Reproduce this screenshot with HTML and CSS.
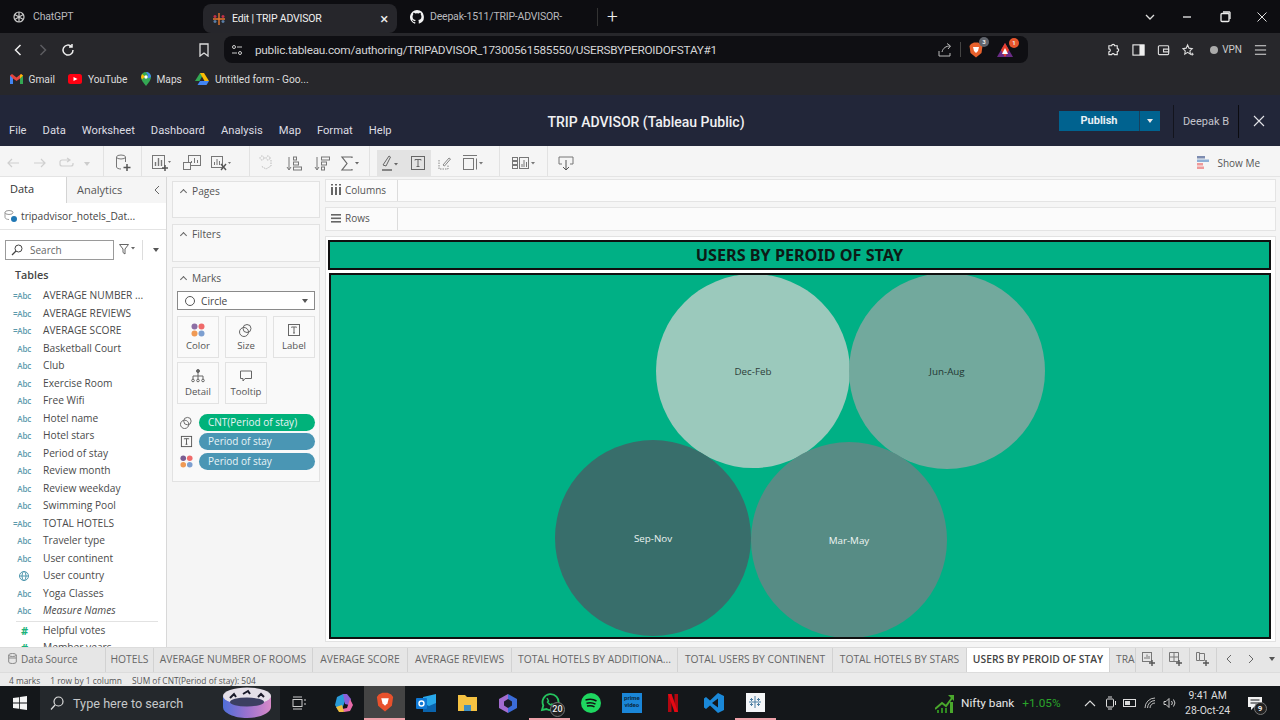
FILE: index.html
```html
<!DOCTYPE html>
<html lang="en">
<head>
  <meta charset="UTF-8" />
  <title>Edit | TRIP ADVISOR</title>
  <link rel="stylesheet" href="styles.css">
</head>
<body>

  <!-- Browser tabs -->
  <div class="tabstrip">
    <div class="btab btab-gpt">
      <svg width="14" height="14" viewBox="0 0 14 14" fill="none" stroke="#c9c9c9" stroke-width="1.2"><circle cx="7" cy="7" r="5"/><path d="M7 2v10M2.700 4.500l8.600 5M2.700 9.500l8.600-5"/></svg>
      <span>ChatGPT</span>
    </div>
    <div class="btab btab-active">
      <svg width="14" height="14" viewBox="0 0 14 14" fill="none" stroke-width="1.4"><path d="M7 1v12M1 7h12" stroke="#e8762c"/><path d="M3 3v3M1.500 4.500h3M11 3v3M9.500 4.500h3" stroke="#c8304a"/><path d="M3 8v3M1.500 9.500h3M11 8v3M9.500 9.500h3" stroke="#5b7fa8"/></svg>
      <span>Edit | TRIP ADVISOR</span>
      <b class="btab-x">×</b>
    </div>
    <div class="btab btab-git">
      <svg width="14" height="14" viewBox="0 0 16 16" fill="#f2f2f2"><path d="M8 0a8 8 0 0 0-2.500 15.600c.4.100.5-.2.500-.4v-1.400c-2.200.5-2.700-1-2.700-1-.4-.9-.9-1.200-.9-1.200-.7-.5.100-.5.100-.5.800.100 1.200.8 1.200.8.700 1.200 1.900.9 2.300.7.100-.5.300-.9.500-1.100-1.800-.2-3.600-.9-3.600-4 0-.9.300-1.600.8-2.100-.1-.2-.4-1 .1-2.100 0 0 .7-.2 2.200.8a7.600 7.600 0 0 1 4 0c1.500-1 2.200-.8 2.200-.8.400 1.100.200 1.900.100 2.100.5.600.8 1.300.8 2.100 0 3.100-1.900 3.700-3.700 3.900.3.300.6.800.6 1.500v2.200c0 .2.100.5.600.4A8 8 0 0 0 8 0z"/></svg>
      <span>Deepak-1511/TRIP-ADVISOR-</span>
    </div>
    <div class="btab-sep"></div>
    <div class="btab-plus">+</div>
    <div class="win-btns">
      <svg width="12" height="12" viewBox="0 0 12 12" fill="none" stroke="#ddd" stroke-width="1.3"><path d="M2 4l4 4 4-4"/></svg>
      <svg width="12" height="12" viewBox="0 0 12 12" fill="none" stroke="#eee" stroke-width="1.3"><path d="M2 6h8"/></svg>
      <svg width="12" height="12" viewBox="0 0 12 12" fill="none" stroke="#eee" stroke-width="1.3"><rect x="2" y="2.500" width="8" height="8" rx="1"/><path d="M4 1h6.500l.5.500V8"/></svg>
      <svg width="12" height="12" viewBox="0 0 12 12" fill="none" stroke="#ddd"><path d="M1.500 1.500l9 9M10.500 1.500l-9 9"/></svg>
    </div>
  </div>

  <!-- Address bar -->
  <div class="addrbar">
    <div class="nav-btns">
      <svg width="14" height="14" viewBox="0 0 14 14" fill="none" stroke="#eee" stroke-width="1.5"><path d="M9.500 2L4.500 7l5 5"/></svg>
      <svg width="14" height="14" viewBox="0 0 14 14" fill="none" stroke="#5c5c60" stroke-width="1.5"><path d="M4.500 2l5 5-5 5"/></svg>
      <svg width="14" height="14" viewBox="0 0 14 14" fill="none" stroke="#eee" stroke-width="1.5"><path d="M12 7a5 5 0 1 1-1.500-3.500M11 1v3H8"/></svg>
    </div>
    <svg class="bookmark-ic" width="12" height="14" viewBox="0 0 12 14" fill="none" stroke="#ddd" stroke-width="1.3"><path d="M2 1h8v12L6 10l-4 3z"/></svg>
    <div class="urlbox">
      <svg width="12" height="12" viewBox="0 0 12 12" fill="none" stroke="#ccc"><circle cx="3" cy="3" r="1.500"/><path d="M6 3h5M1 9h5"/><circle cx="9" cy="9" r="1.500"/></svg>
      <span class="url">public.tableau.com/authoring/TRIPADVISOR_17300561585550/USERSBYPEROIDOFSTAY#1</span>
      <div class="url-icons">
        <svg width="14" height="14" viewBox="0 0 14 14" fill="none" stroke="#bbb"><path d="M1 8v5h11v-3M4 9c1-4 4-6 8-6M9 .5L12.500 3 10 6"/></svg>
        <i class="url-sep"></i>
        <span class="shield">
          <svg width="14" height="16" viewBox="0 0 14 16"><path d="M2 2l3-1.500h4L12 2l1.500 2-1 7L7 15.500 1.500 11l-1-7z" fill="#e8612c"/><path d="M4 5h6L9 9l-2 2-2-2z" fill="#fff"/></svg>
          <b class="badge badge-grey">3</b>
        </span>
        <span class="shield">
          <svg width="16" height="14" viewBox="0 0 16 14"><path d="M8 0l8 14H0z" fill="#6a2b86"/><path d="M8 0l4 7-4 7-4-7z" fill="#e8402c"/><path d="M8 5l3 6H5z" fill="#fff"/></svg>
          <b class="badge badge-red">1</b>
        </span>
      </div>
    </div>
    <div class="ext-icons">
      <svg width="14" height="14" viewBox="0 0 14 14" fill="none" stroke="#e8e8e8" stroke-width="1.2"><path d="M5 2.500a1.600 1.600 0 0 1 3.200 0H11v3a1.600 1.600 0 0 1 0 3.200V12H8a1.600 1.600 0 0 0-3 0H2V9a1.600 1.600 0 0 0 0-3.200V2.500z"/></svg>
      <svg width="14" height="14" viewBox="0 0 14 14"><rect x="1" y="1.500" width="12" height="11" fill="none" stroke="#eee" stroke-width="1.2"/><rect x="8" y="1.500" width="5" height="11" fill="#eee"/></svg>
      <svg width="14" height="14" viewBox="0 0 14 14" fill="none" stroke="#ddd" stroke-width="1.2"><rect x="1.500" y="2.500" width="11" height="9.500" rx="1"/><path d="M7 6h5.500v3H7z"/></svg>
      <svg width="14" height="14" viewBox="0 0 14 14" fill="none" stroke="#ddd" stroke-width="1.2"><path d="M6 1.500l1.500 3.500 3.500.5-2.500 2.500.5 3.500L6 9.500 3 11.500l.5-3.500L1 5.500 4.500 5zM11 10v3M9.500 11.500h3"/></svg>
      <span class="vpn"><i></i>VPN</span>
      <svg width="14" height="14" viewBox="0 0 14 14" fill="none" stroke="#ddd" stroke-width="1.2"><path d="M1 2.500h12M1 7h12M1 11.500h12"/></svg>
    </div>
  </div>

  <!-- Bookmarks -->
  <div class="bookmarks">
    <span class="bm">
      <svg width="13" height="10" viewBox="0 0 13 10"><path d="M0 1.500v8.500h3V4.500L6.500 7 10 4.500V10h3V1.500L11 0 6.500 3.500 2 0z" fill="#e8453c"/><path d="M0 1.500v8.500h3V4.500z" fill="#4285f4"/><path d="M10 4.500V10h3V1.500z" fill="#34a853"/><path d="M11 0l2 1.500L10 4.500V1.500z" fill="#fbbc04"/></svg>
      Gmail
    </span>
    <span class="bm">
      <svg width="14" height="10" viewBox="0 0 14 10"><rect width="14" height="10" rx="2.500" fill="#f01"/><path d="M5.500 3l4 2-4 2z" fill="#fff"/></svg>
      YouTube
    </span>
    <span class="bm">
      <svg width="10" height="14" viewBox="0 0 10 14"><path d="M5 0a5 5 0 0 0-5 5c0 3.500 5 9 5 9s5-5.500 5-9a5 5 0 0 0-5-5z" fill="#34a853"/><path d="M5 0a5 5 0 0 1 5 5L7 6.500V3z" fill="#4285f4"/><path d="M1 2l3 2.500L1 7.500 0 5z" fill="#fbbc04"/><circle cx="5" cy="5" r="1.700" fill="#fff"/></svg>
      Maps
    </span>
    <span class="bm">
      <svg width="14" height="12" viewBox="0 0 14 12"><path d="M5 0h4l-4.500 8H0z" fill="#34a853"/><path d="M9 0l5 8H9.500L5 0z" fill="#fbbc04"/><path d="M2.500 12L5 8h9l-2.500 4z" fill="#4285f4"/></svg>
      Untitled form - Goo...
    </span>
  </div>

  <!-- Tableau header -->
  <div class="appbar">
    <div class="menus">
      <span>File</span><span>Data</span><span>Worksheet</span><span>Dashboard</span><span>Analysis</span><span>Map</span><span>Format</span><span>Help</span>
    </div>
    <div class="wb-title">TRIP ADVISOR (Tableau Public)</div>
    <div class="publish">
      <span class="publish-main">Publish</span>
      <span class="publish-caret"></span>
    </div>
    <div class="user">Deepak B</div>
    <svg class="app-close" width="12" height="12" viewBox="0 0 12 12" fill="none" stroke="#e4e4e8" stroke-width="1.1"><path d="M1 1l10 10M11 1L1 11"/></svg>
  </div>

  <!-- Toolbar -->
  <div class="toolbar">
    <div class="tgroup tg-history">
      <span class="tool t26"><svg width="14" height="12" viewBox="0 0 14 12" fill="none" stroke="#cfcfcf" stroke-width="1.2"><path d="M13 6H2M6 2L2 6l4 4"/></svg></span>
      <span class="tool t28"><svg width="14" height="12" viewBox="0 0 14 12" fill="none" stroke="#cfcfcf" stroke-width="1.2"><path d="M1 6h11M8 2l4 4-4 4"/></svg></span>
      <span class="tool t26"><svg width="16" height="12" viewBox="0 0 16 12" fill="none" stroke="#cfcfcf" stroke-width="1.2"><path d="M10 3H3a2 2 0 0 0-2 2v2a2 2 0 0 0 2 2h9a2 2 0 0 0 2-2V6M8 1l3 2-3 2"/></svg></span>
      <span class="tool t14"><i class="caret caret-light"></i></span>
    </div>
    <div class="tgroup tg-source">
      <span class="tool"><svg width="16" height="18" viewBox="0 0 16 18" fill="none" stroke="#777"><ellipse cx="6" cy="3" rx="4.500" ry="2"/><path d="M1.500 3v10c0 1 2 2 4.500 2M10.500 3v5"/><path d="M12 10v7M8.500 13.500h7" stroke="#555" stroke-width="1.5"/></svg></span>
    </div>
    <div class="tgroup tg-sheets">
      <span class="tool t28"><svg width="20" height="18" viewBox="0 0 20 18" fill="none" stroke="#777"><rect x=".5" y="1.500" width="12" height="13"/><path d="M3.500 12V8M6.500 12V4M9.500 12V6" stroke-width="1.4"/><path d="M13 11v6M10 14h6" stroke="#555" stroke-width="1.5"/><path d="M16 7h3l-1.500 2z" fill="#777" stroke="none"/></svg></span>
      <span class="tool t28 t-mid"><svg width="18" height="16" viewBox="0 0 18 16" fill="none" stroke="#777"><rect x="5.500" y=".5" width="12" height="10"/><path d="M8.500 8V6M11.500 8V3M14.500 8V5"/><rect x=".5" y="7.500" width="7" height="7" fill="#f5f5f5"/></svg></span>
      <span class="tool t28"><svg width="22" height="16" viewBox="0 0 22 16" fill="none" stroke="#777"><rect x=".5" y="1.500" width="11" height="11"/><path d="M3.500 10V7M6 10V4M8.500 10V6"/><path d="M10 9l5 6M15 9l-5 6" stroke="#555" stroke-width="1.4"/><path d="M17 7h3l-1.500 2z" fill="#777" stroke="none"/></svg></span>
    </div>
    <div class="tgroup tg-sort">
      <span class="tool t28"><svg width="14" height="16" viewBox="0 0 14 16" fill="none" stroke="#bbb" stroke-dasharray="1.500 1"><circle cx="3" cy="3" r="2"/><circle cx="9" cy="3" r="2"/><path d="M12 5v6l-5 3-5-3"/></svg></span>
      <span class="tool t28"><svg width="16" height="15" viewBox="0 0 16 15" fill="none" stroke="#777"><path d="M3 1v12M1 11l2 3 2-3"/><rect x="7.500" y="1" width="3" height="3"/><rect x="7.500" y="6" width="5" height="3"/><rect x="7.500" y="11" width="8" height="3"/></svg></span>
      <span class="tool t28"><svg width="16" height="15" viewBox="0 0 16 15" fill="none" stroke="#777"><path d="M3 1v12M1 11l2 3 2-3"/><rect x="7.500" y="1" width="8" height="3"/><rect x="7.500" y="6" width="5" height="3"/><rect x="7.500" y="11" width="3" height="3"/></svg></span>
      <span class="tool t28"><svg width="20" height="15" viewBox="0 0 20 15" fill="none" stroke="#666" stroke-width="1.2"><path d="M12 2V1H2l5 6.500L2 14h10v-1"/><path d="M15 6h4l-2 2.500z" fill="#666" stroke="none"/></svg></span>
    </div>
    <div class="tgroup tg-format">
      <span class="tool t-hl"><svg width="20" height="16" viewBox="0 0 20 16" fill="none" stroke="#666"><path d="M2 10L8 1l1.500 1L5 11z"/><path d="M1 15h10" stroke-width="1.5"/><path d="M13 8h4l-2 2.500z" fill="#666" stroke="none"/></svg></span>
      <span class="tool t-hl"><svg width="14" height="14" viewBox="0 0 14 14" fill="none" stroke="#666"><rect x=".5" y=".5" width="13" height="13"/><path d="M4 4.500V3.500h6v1M7 3.500v7M5.500 10.500h3"/></svg></span>
      <span class="tool t28"><svg width="14" height="14" viewBox="0 0 14 14" fill="none" stroke="#888"><path d="M1 4v9h9V9" stroke-dasharray="1.500 1"/><path d="M5 9l6-7 1.500 1-6 7z"/></svg></span>
      <span class="tool t28"><svg width="22" height="16" viewBox="0 0 22 16" fill="none" stroke="#777"><path d="M1 .5h14"/><rect x="1.500" y="3.500" width="10" height="11"/><path d="M14.500 3.500v11"/><path d="M17 7h4l-2 2.500z" fill="#777" stroke="none"/></svg></span>
    </div>
    <div class="tgroup tg-fit">
      <span class="tool"><svg width="24" height="14" viewBox="0 0 24 14" fill="none" stroke="#777"><rect x=".5" y="1.500" width="5" height="3"/><rect x=".5" y="5.500" width="5" height="3"/><rect x=".5" y="9.500" width="5" height="3"/><rect x="7.500" y="1.500" width="9" height="11"/><path d="M10 11V8M12 11V4M14.500 11V6"/><path d="M19 6h4l-2 2.500z" fill="#777" stroke="none"/></svg></span>
    </div>
    <div class="tgroup tg-share">
      <span class="tool"><svg width="16" height="15" viewBox="0 0 16 15" fill="none" stroke="#777"><path d="M4 8H1V1h14v7h-3"/><path d="M8 4v10M5 11l3 3 3-3" stroke="#555"/></svg></span>
    </div>
    <div class="showme">
      <svg width="13" height="14" viewBox="0 0 13 14"><rect width="8" height="2.500" fill="#7d8cb0"/><rect y="3.500" width="12" height="2.500" fill="#8fb0d6"/><rect y="7" width="6" height="2.500" fill="#ef9a9a"/><rect y="10.500" width="7" height="2.500" fill="#ef9a9a"/></svg>
      <span>Show Me</span>
    </div>
  </div>

  <!-- Workspace -->
  <div class="workspace">

    <div class="datapane">
      <div class="dp-tabs">
        <div class="dp-tab dp-tab-on">Data</div>
        <div class="dp-tab dp-tab-off">Analytics</div>
        <svg class="dp-collapse" width="8" height="10" viewBox="0 0 8 10" fill="none" stroke="#666"><path d="M6 1L2 5l4 4"/></svg>
      </div>
      <div class="dp-source">
        <svg width="14" height="14" viewBox="0 0 14 14"><ellipse cx="5" cy="3.500" rx="4" ry="2" fill="none" stroke="#999"/><path d="M1 3.500v5c0 1 2 2 4 2" fill="none" stroke="#999"/><circle cx="10" cy="10" r="3" fill="#1f77b4"/></svg>
        <span>tripadvisor_hotels_Dat...</span>
      </div>
      <div class="dp-search">
        <div class="searchbox">
          <svg width="12" height="12" viewBox="0 0 12 12" fill="none" stroke="#444"><circle cx="7.500" cy="4.500" r="3.500"/><path d="M5 7l-4 4" stroke-width="1.3"/></svg>
          <span>Search</span>
        </div>
        <svg width="16" height="11" viewBox="0 0 16 11" fill="none" stroke="#666"><path d="M.5.500h9l-3.500 4.500v5l-2-1.500V5z"/><path d="M12 3h4l-2 2.500z" fill="#666" stroke="none"/></svg>
        <i class="dp-vsep"></i>
        <i class="caret caret-dark"></i>
      </div>
      <div class="dp-heading">Tables</div>
      <div class="fields">
        <div class="field"><i class="abc">=Abc</i>AVERAGE NUMBER ...</div>
        <div class="field"><i class="abc">=Abc</i>AVERAGE REVIEWS</div>
        <div class="field"><i class="abc">=Abc</i>AVERAGE SCORE</div>
        <div class="field"><i class="abc">Abc</i>Basketball Court</div>
        <div class="field"><i class="abc">Abc</i>Club</div>
        <div class="field"><i class="abc">Abc</i>Exercise Room</div>
        <div class="field"><i class="abc">Abc</i>Free Wifi</div>
        <div class="field"><i class="abc">Abc</i>Hotel name</div>
        <div class="field"><i class="abc">Abc</i>Hotel stars</div>
        <div class="field"><i class="abc">Abc</i>Period of stay</div>
        <div class="field"><i class="abc">Abc</i>Review month</div>
        <div class="field"><i class="abc">Abc</i>Review weekday</div>
        <div class="field"><i class="abc">Abc</i>Swimming Pool</div>
        <div class="field"><i class="abc">=Abc</i>TOTAL HOTELS</div>
        <div class="field"><i class="abc">Abc</i>Traveler type</div>
        <div class="field"><i class="abc">Abc</i>User continent</div>
        <div class="field"><i class="abc abc-geo"><svg width="10" height="10" viewBox="0 0 10 10" fill="none" stroke="#4f97ad"><circle cx="5" cy="5" r="4.500"/><ellipse cx="5" cy="5" rx="2" ry="4.500"/><path d="M.5 5h9"/></svg></i>User country</div>
        <div class="field"><i class="abc">Abc</i>Yoga Classes</div>
        <div class="field field-em"><i class="abc">Abc</i>Measure Names</div>
        <div class="field-sep"></div>
        <div class="field"><i class="abc abc-num">#</i>Helpful votes</div>
        <div class="field"><i class="abc abc-num">#</i>Member years</div>
      </div>
    </div>

    <div class="cards">
      <div class="card card-pages"><div class="card-title"><i class="chev"></i>Pages</div></div>
      <div class="card card-filters"><div class="card-title"><i class="chev"></i>Filters</div></div>
      <div class="card card-marks">
        <div class="card-title"><i class="chev"></i>Marks</div>
        <div class="marktype">
          <i class="ring"></i><span>Circle</span><i class="caret caret-dark"></i>
        </div>
        <div class="markgrid">
          <div class="markbtn">
            <svg width="14" height="14" viewBox="0 0 14 14"><circle cx="3.500" cy="3.500" r="3" fill="#8e6fa5"/><circle cx="10.500" cy="3.500" r="3" fill="#ef6a6a"/><circle cx="3.500" cy="10.500" r="3" fill="#f09a55"/><circle cx="10.500" cy="10.500" r="3" fill="#7d9fd0"/></svg>
            <span>Color</span>
          </div>
          <div class="markbtn">
            <svg width="14" height="14" viewBox="0 0 14 14" fill="none" stroke="#666"><circle cx="5" cy="9" r="4.500"/><circle cx="8" cy="5.500" r="4"/></svg>
            <span>Size</span>
          </div>
          <div class="markbtn">
            <svg width="14" height="14" viewBox="0 0 14 14" fill="none" stroke="#666"><rect x="1.500" y="1.500" width="11" height="11"/><path d="M4.500 4.500v-.5h5v.5M7 4v6M6 10h2"/></svg>
            <span>Label</span>
          </div>
          <div class="markbtn">
            <svg width="14" height="14" viewBox="0 0 14 14" fill="none" stroke="#666"><circle cx="7" cy="2" r="1.500" fill="#666"/><path d="M7 3v4M2 10V7h10v3M7 7v3"/><circle cx="2" cy="11.500" r="1.300"/><circle cx="7" cy="11.500" r="1.300"/><circle cx="12" cy="11.500" r="1.300"/></svg>
            <span>Detail</span>
          </div>
          <div class="markbtn">
            <svg width="14" height="14" viewBox="0 0 14 14" fill="none" stroke="#666"><path d="M1.500 2h11v7.500H6l-2 2.500V9.500H1.500z"/></svg>
            <span>Tooltip</span>
          </div>
        </div>
        <div class="pill-row">
          <svg width="13" height="13" viewBox="0 0 14 14" fill="none" stroke="#666"><circle cx="5" cy="9" r="4.500"/><circle cx="8" cy="5.500" r="4"/></svg>
          <span class="pill pill-green">CNT(Period of stay)</span>
        </div>
        <div class="pill-row">
          <svg width="13" height="13" viewBox="0 0 14 14" fill="none" stroke="#555"><rect x="1.500" y="1.500" width="11" height="11"/><path d="M4.500 4.500v-.5h5v.5M7 4v6M6 10h2"/></svg>
          <span class="pill pill-blue">Period of stay</span>
        </div>
        <div class="pill-row">
          <svg width="13" height="13" viewBox="0 0 14 14"><circle cx="3.500" cy="3.500" r="3" fill="#7a5c92"/><circle cx="10.500" cy="3.500" r="3" fill="#ef6a6a"/><circle cx="3.500" cy="10.500" r="3" fill="#f09a55"/><circle cx="10.500" cy="10.500" r="3" fill="#7d9fd0"/></svg>
          <span class="pill pill-blue">Period of stay</span>
        </div>
      </div>
    </div>

    <div class="canvas-col">
      <div class="shelf shelf-cols">
        <div class="shelf-label">
          <svg width="10" height="11" viewBox="0 0 10 11" fill="#666"><rect x="0" y="3" width="2" height="8"/><rect x="4" y="3" width="2" height="8"/><rect x="8" y="3" width="2" height="8"/><rect x="0" y="0" width="2" height="1.500"/><rect x="4" y="0" width="2" height="1.500"/><rect x="8" y="0" width="2" height="1.500"/></svg>
          Columns
        </div>
      </div>
      <div class="shelf shelf-rows">
        <div class="shelf-label">
          <svg width="10" height="9" viewBox="0 0 10 9" fill="#666"><rect y="0" width="10" height="1.600"/><rect y="3.500" width="10" height="1.600"/><rect y="7" width="10" height="1.600"/></svg>
          Rows
        </div>
      </div>
      <div class="view">
        <div class="view-title">USERS BY PEROID OF STAY</div>
        <div class="chart">
          <div class="bubble b-dec">Dec-Feb</div>
          <div class="bubble b-jun">Jun-Aug</div>
          <div class="bubble b-sep">Sep-Nov</div>
          <div class="bubble b-mar">Mar-May</div>
        </div>
      </div>
    </div>
  </div>

  <!-- Sheet tabs -->
  <div class="sheetbar">
    <div class="stab stab-source">
      <svg width="9" height="11" viewBox="0 0 9 11" fill="none" stroke="#888"><ellipse cx="4.500" cy="2" rx="3.800" ry="1.500"/><path d="M.7 2v7c0 .8 1.700 1.500 3.800 1.500s3.800-.7 3.800-1.500V2M.7 5h7.600"/></svg>
      Data Source
    </div>
    <div class="stab s-hotels">HOTELS</div>
    <div class="stab s-rooms">AVERAGE NUMBER OF ROOMS</div>
    <div class="stab s-score">AVERAGE SCORE</div>
    <div class="stab s-reviews">AVERAGE REVIEWS</div>
    <div class="stab s-add">TOTAL HOTELS BY ADDITIONA...</div>
    <div class="stab s-cont">TOTAL USERS BY CONTINENT</div>
    <div class="stab s-stars">TOTAL HOTELS BY STARS</div>
    <div class="stab stab-on">USERS BY PEROID OF STAY</div>
    <div class="stab s-tra">TRA</div>
    <div class="stab s-ic">
      <svg width="14" height="14" viewBox="0 0 14 14" fill="none" stroke="#777"><rect x=".5" y=".5" width="9" height="9"/><path d="M3 7V5M5 7V2.500M7 7V4"/><path d="M10 8v6M7 11h6" stroke="#555" stroke-width="1.4"/></svg>
    </div>
    <div class="stab s-ic">
      <svg width="14" height="14" viewBox="0 0 14 14" fill="none" stroke="#777"><path d="M.5.500h9v9h-9zM.5 5h9M5 .5v9"/><path d="M10 8v6M7 11h6" stroke="#555" stroke-width="1.4"/></svg>
    </div>
    <div class="stab s-ic">
      <svg width="14" height="14" viewBox="0 0 14 14" fill="none" stroke="#777"><path d="M.5.500h3v8h-3zM3.500 1.500h5v7h-5"/><path d="M10 8v6M7 11h6" stroke="#555" stroke-width="1.4"/></svg>
    </div>
    <div class="sheet-nav">
      <svg width="8" height="10" viewBox="0 0 8 10" fill="none" stroke="#666"><path d="M6 1L2 5l4 4"/></svg>
      <svg width="8" height="10" viewBox="0 0 8 10" fill="none" stroke="#666"><path d="M2 1l4 4-4 4"/></svg>
      <i class="caret caret-dark"></i>
    </div>
  </div>

  <!-- Status line -->
  <div class="statusbar">
    <span>4 marks</span><span>1 row by 1 column</span><span>SUM of CNT(Period of stay): 504</span>
  </div>

  <!-- Windows taskbar -->
  <div class="taskbar">
    <svg class="win-logo" width="14" height="14" viewBox="0 0 14 14" fill="#f4f4f4"><path d="M0 2l6-.8v5.400H0zM6.800 1.100L14 0v6.600H6.800zM0 7.400h6v5.400L0 12zM6.800 7.400H14V14l-7.200-1z"/></svg>
    <div class="tb-search">
      <svg width="14" height="14" viewBox="0 0 14 14" fill="none" stroke="#ddd" stroke-width="1.2"><circle cx="8.500" cy="5.500" r="4.500"/><path d="M5 9l-4 4.500"/></svg>
      <span>Type here to search</span>
      <svg class="tb-hoop" width="48" height="32" viewBox="0 0 48 32">
        <defs><linearGradient id="hoopSide" x1="0" x2="1" y1="0" y2="0"><stop offset="0" stop-color="#4f6fd8"/><stop offset=".5" stop-color="#9a72d0"/><stop offset="1" stop-color="#d88ac8"/></linearGradient></defs>
        <path d="M0 9v11c0 6 11 11 24 11s24-5 24-11V9z" fill="url(#hoopSide)"/>
        <ellipse cx="24" cy="9" rx="24" ry="8.500" fill="#e4dfe8"/>
        <ellipse cx="24" cy="15" rx="17" ry="4.500" fill="#3c3f62"/>
        <path d="M7 11l4-4 2 3M20 7l5-3 2 3M35 10l3-3 3 3" fill="none" stroke="#1a1a2a" stroke-width="2"/>
      </svg>
    </div>
    <svg class="tb-view" width="14" height="14" viewBox="0 0 14 14" fill="none" stroke="#ccc"><path d="M1 1h9M1 13h9"/><rect x="1" y="3.500" width="9" height="7"/><path d="M13 3v2M13 7v2"/></svg>
    <div class="tb-apps">
      <span class="app"><svg width="20" height="20" viewBox="0 0 20 20"><path d="M3 4l6-3 4 2-5 13-4 1-3-5z" fill="#2a9bd8"/><path d="M9 1h4l4 5-2 6-4-1z" fill="#8a5fd8"/><path d="M16 6l3 6-3 6-6 1-2-3 5-1z" fill="#e86aa8"/><path d="M2 14l6-2 2 7H5z" fill="#f0c040"/></svg></span>
      <span class="app app-on"><svg width="18" height="20" viewBox="0 0 14 16"><path d="M2 2l3-1.500h4L12 2l1.500 2-1 7L7 15.500 1.500 11l-1-7z" fill="#e8512c"/><path d="M4 5h6L9 9l-2 2-2-2z" fill="#fff"/></svg></span>
      <span class="app"><svg width="20" height="18" viewBox="0 0 20 18"><path d="M7 3l13-3v15H7z" fill="#28a8ea"/><path d="M7 9l6 3 7-3v9H7z" fill="#0a64ad"/><rect y="4" width="11" height="11" rx="1" fill="#0f78d4"/><circle cx="5.500" cy="9.500" r="2.500" fill="none" stroke="#fff" stroke-width="1.4"/></svg></span>
      <span class="app"><svg width="19" height="16" viewBox="0 0 19 16"><path d="M0 0h7l2 2h10v14H0z" fill="#f5c242"/><rect x="6" y="10" width="7" height="6" fill="#3f8fc4"/></svg></span>
      <span class="app"><svg width="18" height="19" viewBox="0 0 18 19"><path d="M9 0l9 5v9l-9 5z" fill="#3b6cd8"/><path d="M9 0L0 5v9l9 5z" fill="#a36cd0"/><path d="M9 5l4 2.500v4L9 14l-4-2.500v-4z" fill="#1d1d2a"/></svg></span>
      <span class="app app-mark">
        <svg width="20" height="20" viewBox="0 0 20 20" fill="none" stroke="#25c35e" stroke-width="1.8"><path d="M2 18l1.300-4.500A8 8 0 1 1 6.500 17z"/><path d="M7 6l1.500 3-1 1c1 1.500 2 2.500 3.500 3l1-1 2 1.500" stroke-width="1.5"/></svg>
        <b class="wa-badge">20</b>
      </span>
      <span class="app"><svg width="20" height="20" viewBox="0 0 20 20"><circle cx="10" cy="10" r="10" fill="#1ed760"/><path d="M4.500 7c4-1 8-.8 11 1M5.500 10.200c3.500-.8 6.500-.5 9 1M6 13c3-.6 5.500-.4 7.500.8" fill="none" stroke="#111" stroke-width="1.5"/></svg></span>
      <span class="app"><span class="prime">prime<br>video</span></span>
      <span class="app"><svg width="10" height="18" viewBox="0 0 10 18"><path d="M0 0h3.500v18L0 18z" fill="#b20710"/><path d="M6.500 0H10v18H6.500z" fill="#b20710"/><path d="M0 0h3.500l6.500 18H6.500z" fill="#e50914"/></svg></span>
      <span class="app"><svg width="20" height="20" viewBox="0 0 20 20"><path d="M14 0l6 3v14l-6 3-8-7.500L2 16l-2-1.500V5.500L2 4l4 3.500z" fill="#1a88d8"/><path d="M14 5.500L8 10l6 4.500z" fill="#14171a"/></svg></span>
      <span class="app app-mark">
        <span class="tb-tile"><svg width="14" height="14" viewBox="0 0 14 14" fill="none" stroke="#4d7fa3"><path d="M7 1v12M1 7h12M3.500 3v3M2 4.500h3M10.500 3v3M9 4.500h3M3.500 8v3M2 9.500h3M10.500 8v3M9 9.500h3"/></svg></span>
      </span>
    </div>
    <div class="tb-tray">
      <svg class="tray-chart" width="20" height="19" viewBox="0 0 20 19"><path d="M0 15l7-6 4 3 6-8" fill="none" stroke="#4aa82c" stroke-width="2"/><path d="M13 1h6v6z" fill="#4aa82c"/><rect x="2" y="16" width="2" height="3" fill="#2f8a20"/><rect x="6" y="14" width="2" height="5" fill="#2f8a20"/><rect x="10" y="14" width="2" height="5" fill="#2f8a20"/><rect x="15" y="8" width="3" height="11" fill="#4aa82c"/></svg>
      <span class="nifty">Nifty bank</span>
      <span class="nifty-up">+1.05%</span>
      <svg class="tray-up" width="12" height="7" viewBox="0 0 12 7" fill="none" stroke="#ddd" stroke-width="1.1"><path d="M1 6l5-5 5 5"/></svg>
      <div class="tray-icons">
        <svg width="12" height="14" viewBox="0 0 12 14" fill="none" stroke="#ddd"><rect x="1.500" y="3" width="7" height="8" rx="1"/><path d="M3 1h4M3 13h4M10.500 5v4"/></svg>
        <svg width="14" height="10" viewBox="0 0 14 10"><rect x=".5" y="1.500" width="12" height="7" fill="none" stroke="#ddd"/><rect x="2" y="3" width="5" height="4" fill="#ddd"/></svg>
        <svg width="12" height="12" viewBox="0 0 12 12" fill="none" stroke="#bbb"><path d="M1 11a10 10 0 0 1 10-10M3.500 11a7.500 7.500 0 0 1 7.500-7.500M6 11a5 5 0 0 1 5-5"/></svg>
        <svg width="14" height="12" viewBox="0 0 14 12" fill="none" stroke="#ccc"><path d="M1 4.500v3h2l3 3v-9l-3 3zM8.500 4a3 3 0 0 1 0 4M10.500 2.500a5.500 5.500 0 0 1 0 7"/></svg>
      </div>
      <div class="clock"><span>9:41 AM</span><span>28-Oct-24</span></div>
      <span class="notif">
        <svg width="14" height="13" viewBox="0 0 14 13"><path d="M0 0h14v10H6l-3 3v-3H0z" fill="#f2f2f2"/><path d="M2.500 3h9M2.500 6h9" stroke="#14171a"/></svg>
        <b class="notif-badge">9</b>
      </span>
    </div>
  </div>

</body>
</html>
```

FILE: styles.css
```css
* {
  box-sizing: border-box;
}

html,
body {
  margin: 0;
  height: 720px;
  overflow: hidden;
}

body {
  font-family: "Open Sans", Arial, sans-serif;
  display: flex;
  flex-direction: column;
  background: #f5f5f5;
}

i {
  font-style: normal;
}

/* browser chrome */
.tabstrip {
  height: 33px;
  background: #0d0d11;
  display: flex;
  align-items: center;
  font-family: "Roboto", sans-serif;
  font-size: 10.5px;
  letter-spacing: -0.2px;
  color: #b9b9bd;
  flex: none;
}

.btab {
  display: flex;
  align-items: center;
  gap: 6px;
}

.btab-gpt {
  width: 203px;
  padding-left: 12px;
  gap: 7px;
}

.btab-active {
  width: 194px;
  height: 29px;
  margin-top: 4px;
  padding: 0 9px;
  background: #26262b;
  border-radius: 8px;
  color: #f0f0f0;
}

.btab-active span {
  flex: 1;
}

.btab-x {
  color: #eee;
  font-size: 15px;
  font-weight: 400;
}

.btab-git {
  width: 200px;
  padding-left: 13px;
}

.btab-sep {
  width: 1px;
  height: 18px;
  background: #333;
}

.btab-plus {
  margin-left: 9px;
  color: #eee;
  font-size: 19px;
  font-weight: 300;
}

.win-btns {
  margin-left: auto;
  width: 136px;
  padding-right: 12px;
  display: flex;
  justify-content: space-between;
}

.addrbar {
  height: 33px;
  background: #27272b;
  display: flex;
  align-items: center;
  flex: none;
}

.nav-btns {
  width: 76px;
  padding-left: 11px;
  display: flex;
  gap: 11px;
}

.bookmark-ic {
  margin-left: 122px;
}

.urlbox {
  margin-left: 14px;
  width: 804px;
  height: 27px;
  background: #0f0f13;
  border-radius: 8px;
  padding: 0 9px 0 7px;
  display: flex;
  align-items: center;
  font-family: "Roboto", sans-serif;
  color: #d4d4d6;
}

.url {
  margin-left: 12px;
  font-size: 11.8px;
  letter-spacing: -0.26px;
}

.url-icons {
  margin-left: auto;
  display: flex;
  align-items: center;
  gap: 8px;
}

.url-sep {
  width: 1px;
  height: 15px;
  background: #444;
}

.shield {
  position: relative;
  display: flex;
  margin-right: 6px;
}

.badge {
  position: absolute;
  top: -5px;
  right: -6px;
  width: 10px;
  height: 10px;
  border-radius: 50%;
  font-size: 6px;
  line-height: 10px;
  text-align: center;
  color: #eee;
}

.badge-grey {
  background: #60646c;
}

.badge-red {
  background: #e8552c;
}

.ext-icons {
  margin-left: 79px;
  width: 160px;
  display: flex;
  align-items: center;
  gap: 12px;
}

.vpn {
  margin-left: 3px;
  display: flex;
  align-items: center;
  gap: 4px;
  font-size: 10px;
  color: #ccc;
  font-family: "Roboto", sans-serif;
}

.vpn i {
  width: 8px;
  height: 8px;
  border-radius: 50%;
  background: #aaa;
}

.bookmarks {
  height: 29px;
  background: #27272b;
  display: flex;
  align-items: center;
  padding: 0 0 3px 10px;
  gap: 13.5px;
  font-family: "Roboto", sans-serif;
  font-size: 10.2px;
  color: #dedede;
  flex: none;
}

.bm {
  display: flex;
  align-items: center;
  gap: 5.5px;
}

/* tableau header */
.appbar {
  height: 51px;
  background: #222639;
  position: relative;
  flex: none;
  display: flex;
  align-items: flex-start;
  color: #e8e8ec;
  font-family: "Roboto", sans-serif;
}

.menus {
  display: flex;
  gap: 16px;
  padding: 29px 0 0 9px;
  font-size: 11.2px;
  color: #dcdce2;
}

.wb-title {
  position: absolute;
  left: 0;
  top: 19px;
  width: 1292px;
  text-align: center;
  font-size: 14px;
  font-weight: 500;
  color: #f0f0f2;
}

.publish {
  position: absolute;
  left: 1059px;
  top: 16px;
  width: 101px;
  height: 20px;
  display: flex;
  background: #00628f;
}

.publish-main {
  flex: 1;
  text-align: center;
  font-size: 11px;
  font-weight: 700;
  line-height: 20px;
  color: #e8f0f4;
  border-right: 1px solid #18405c;
}

.publish-caret {
  width: 20px;
  position: relative;
}

.publish-caret::after {
  content: "";
  position: absolute;
  left: 7px;
  top: 8px;
  border: 3px solid transparent;
  border-top: 4px solid #e8e8e8;
}

.user {
  position: absolute;
  left: 1173px;
  top: 10px;
  width: 66px;
  height: 33px;
  border-left: 1px solid #13141d;
  border-right: 1px solid #0b0b10;
  text-align: center;
  font-size: 11px;
  line-height: 33px;
  color: #c4c4cc;
}

.app-close {
  position: absolute;
  left: 1253px;
  top: 20px;
}

/* toolbar */
.toolbar {
  height: 31px;
  background: #f5f5f5;
  border-bottom: 1px solid #e4e4e4;
  display: flex;
  flex: none;
}

.tgroup {
  display: flex;
  align-items: flex-start;
  height: 30px;
  padding-top: 4px;
  border-right: 1px solid #e2e2e2;
}

.tool {
  display: flex;
  align-items: center;
  justify-content: center;
  height: 26px;
}

.t26 {
  width: 26px;
}

.t28 {
  width: 28px;
}

.t14 {
  width: 14px;
}

.tg-history {
  width: 104px;
}

.tg-source {
  width: 38px;
  justify-content: center;
}

.tg-sheets {
  width: 108px;
  padding-left: 6px;
}

.t-mid {
  margin: 0 2px;
}

.tg-sort {
  width: 120px;
  padding-left: 2px;
}

.tg-format {
  width: 130px;
  padding-left: 7px;
}

.t-hl {
  width: 27px;
  background: #e3e3e3;
}

.tg-fit {
  width: 48px;
  justify-content: center;
}

.tg-share {
  width: 36px;
  justify-content: center;
  border-right: none;
}

.showme {
  margin-left: auto;
  padding: 3px 20px 0 0;
  display: flex;
  align-items: center;
  gap: 7px;
  font-size: 10px;
  color: #555;
}

.caret {
  display: block;
  width: 0;
  height: 0;
  border-left: 3.5px solid transparent;
  border-right: 3.5px solid transparent;
}

.tool .caret {
  margin-top: 2px;
}

.caret-light {
  border-top: 4px solid #ccc;
}

.caret-dark {
  border-top: 4px solid #555;
}

/* workspace */
.workspace {
  height: 470px;
  display: flex;
  background: #f5f5f5;
  flex: none;
}

.datapane {
  width: 167px;
  height: 470px;
  overflow: hidden;
  background: #fff;
  border-right: 1px solid #d8d8d8;
  font-size: 10.2px;
  color: #444;
  flex: none;
}

.dp-tabs {
  height: 26px;
  display: flex;
  align-items: center;
  border-bottom: 1px solid #dcdcdc;
  position: relative;
}

.dp-tab {
  height: 26px;
  line-height: 25px;
  font-size: 11px;
}

.dp-tab-on {
  width: 67px;
  padding-left: 10px;
  background: #fff;
  border-right: 1px solid #d4d4d4;
  height: 27px;
  color: #333;
}

.dp-tab-off {
  flex: 1;
  padding-left: 10px;
  background: #f5f5f5;
  color: #555;
}

.dp-collapse {
  position: absolute;
  right: 5px;
  top: 8px;
}

.dp-source {
  height: 27px;
  display: flex;
  align-items: center;
  gap: 3px;
  padding-left: 4px;
  border-bottom: 1px solid #e4e4e4;
  color: #444;
}

.dp-search {
  height: 29px;
  margin-top: 2px;
  display: flex;
  align-items: center;
  padding: 6px 0 0 5px;
}

.searchbox {
  width: 109px;
  height: 20px;
  border: 1px solid #9a9a9a;
  display: flex;
  align-items: center;
  gap: 7px;
  padding-left: 5px;
  font-size: 10px;
  color: #666;
  margin-right: 5px;
}

.dp-vsep {
  width: 1px;
  height: 20px;
  background: #ddd;
  margin: 0 10px 0 7px;
}

.dp-heading {
  padding: 6px 0 0 15px;
  font-size: 10.8px;
  font-weight: 600;
  color: #444;
  height: 26px;
}

.fields {
  display: flex;
  flex-direction: column;
}

.field {
  height: 17.5px;
  display: flex;
  align-items: center;
  white-space: nowrap;
  font-size: 10.2px;
  line-height: 17px;
  color: #4a4a4a;
}

.field-em {
  font-style: italic;
}

.abc {
  width: 43px;
  padding-right: 12px;
  flex: none;
  text-align: right;
  font-size: 8px;
  font-weight: 600;
  letter-spacing: -0.2px;
  color: #5b99ac;
  font-style: normal;
}

.abc-geo {
  display: flex;
  justify-content: flex-end;
  padding-right: 14px;
}

.abc-num {
  color: #19b27a;
  font-size: 11px;
  font-weight: 700;
  padding-right: 15px;
}

.field-sep {
  height: 1px;
  margin: 1px 8px 0 16px;
  background: #e2e2e2;
}

/* marks cards */
.cards {
  width: 153px;
  padding: 4px 0 0 5px;
  display: flex;
  flex-direction: column;
  gap: 6px;
  flex: none;
}

.card {
  width: 148px;
  background: #f9f9f9;
  border: 1px solid #e2e2e2;
  font-size: 10.2px;
  color: #555;
}

.card-pages {
  height: 37px;
}

.card-filters {
  height: 38px;
}

.card-marks {
  height: 215px;
  margin-top: -1px;
  padding: 0 4px;
}

.card-title {
  height: 18px;
  padding-left: 8px;
  display: flex;
  align-items: center;
  gap: 6px;
  font-size: 10.2px;
}

.card-marks .card-title {
  margin-left: -4px;
  height: 19px;
}

.chev {
  width: 5px;
  height: 5px;
  border-left: 1px solid #666;
  border-top: 1px solid #666;
  transform: rotate(45deg);
  margin-top: 3px;
}

.marktype {
  height: 19px;
  margin-top: 4px;
  border: 1px solid #8a8a8a;
  background: #fff;
  display: flex;
  align-items: center;
  gap: 6px;
  padding: 0 6px 0 7px;
  color: #444;
}

.marktype .caret {
  margin-left: auto;
}

.ring {
  width: 10px;
  height: 10px;
  border: 1px solid #555;
  border-radius: 50%;
}

.markgrid {
  display: grid;
  grid-template-columns: repeat(3, 42px);
  gap: 4px 6px;
  margin-top: 6px;
}

.markbtn {
  height: 42px;
  background: #fafafa;
  border: 1px solid #e2e2e2;
  display: flex;
  flex-direction: column;
  align-items: center;
  gap: 2px;
  padding-top: 6px;
  font-size: 9.6px;
  color: #555;
}

.pill-row {
  display: flex;
  align-items: center;
  gap: 6px;
  height: 19.25px;
  padding-left: 3px;
}

.markgrid + .pill-row {
  margin-top: 9px;
}

.pill-row svg {
  flex: none;
}

.pill {
  width: 116px;
  height: 17px;
  border-radius: 9px;
  padding-left: 9px;
  font-size: 10px;
  line-height: 16px;
  color: #e8f4f6;
}

.pill-green {
  background: #00b27a;
}

.pill-blue {
  background: #4a96b4;
}

/* shelves and view */
.canvas-col {
  flex: 1;
  padding: 2px 4px 0 5px;
  display: flex;
  flex-direction: column;
}

.shelf {
  height: 23px;
  background: #fbfbfb;
  border: 1px solid #e4e4e4;
  margin-bottom: 5px;
  flex: none;
}

.shelf-rows {
  height: 24px;
}

.shelf-label {
  width: 72px;
  height: 100%;
  border-right: 1px solid #dcdcdc;
  display: flex;
  align-items: center;
  gap: 4px;
  padding: 0 0 2px 5px;
  font-size: 10px;
  color: #555;
}

.view {
  height: 406px;
  background: #fff;
  border: 1px solid #e2e2e2;
  padding: 3px 4px 0 2px;
  flex: none;
}

.view-title {
  height: 30px;
  background: #00b085;
  border: 2px solid #101010;
  text-align: center;
  font-family: "Noto Sans", sans-serif;
  font-size: 16.2px;
  font-weight: 700;
  line-height: 26px;
  color: #0d1a16;
}

.chart {
  position: relative;
  height: 366px;
  width: 942px;
  margin: 3px 0 0 1px;
  background: #00b085;
  border: 2px solid #101010;
  overflow: hidden;
}

.bubble {
  position: absolute;
  width: 196px;
  height: 196px;
  padding-top: 1px;
  border-radius: 50%;
  display: flex;
  align-items: center;
  justify-content: center;
  font-family: "Open Sans", sans-serif;
  font-size: 9.8px;
}

.b-dec {
  left: 325px;
  top: -1px;
  width: 194px;
  height: 194px;
  background: #9bc9bc;
  color: #2d3e3a;
}

.b-jun {
  left: 518px;
  top: -2px;
  background: #72a99d;
  color: #1f3531;
}

.b-sep {
  left: 224px;
  top: 165px;
  background: #386e6b;
  color: #e9f2f0;
}

.b-mar {
  left: 420px;
  top: 167px;
  background: #578c85;
  color: #eef5f3;
}

/* sheet tabs */
.sheetbar {
  height: 26px;
  background: #e6e6e6;
  border-top: 1px solid #dcdcdc;
  border-bottom: 1px solid #dcdcdc;
  display: flex;
  padding-left: 1px;
  font-size: 10.3px;
  color: #666;
  flex: none;
  overflow: hidden;
}

.stab {
  height: 24px;
  padding-bottom: 3px;
  display: flex;
  align-items: center;
  justify-content: center;
  border-right: 1px solid #d2d2d2;
  white-space: nowrap;
  flex: none;
  overflow: hidden;
}

.stab-source {
  width: 105px;
  justify-content: flex-start;
  padding-left: 7px;
  gap: 4px;
  font-size: 10px;
}

.s-hotels {
  width: 48px;
}

.s-rooms {
  width: 159px;
}

.s-score {
  width: 95px;
}

.s-reviews {
  width: 104px;
}

.s-add {
  width: 166px;
}

.s-cont {
  width: 155px;
}

.s-stars {
  width: 134px;
}

.stab-on {
  width: 143px;
  background: #fff;
  color: #444;
  font-weight: 600;
  font-size: 10.3px;
}

.s-tra {
  width: 26px;
  justify-content: flex-start;
  padding-left: 6px;
}

.s-ic {
  width: 27px;
}

.sheet-nav {
  flex: 1;
  display: flex;
  align-items: center;
  gap: 14px;
  padding: 0 0 3px 8px;
}

.statusbar {
  height: 13px;
  padding: 1px 0 0 9px;
  background: #ebebeb;
  display: flex;
  align-items: center;
  gap: 10px;
  font-size: 8.4px;
  color: #555;
  flex: none;
}

/* taskbar */
.taskbar {
  height: 34px;
  background: #14171a;
  position: relative;
  display: flex;
  align-items: center;
  font-family: "Roboto", sans-serif;
  color: #eee;
  flex: none;
}

.win-logo {
  margin-left: 13px;
}

.tb-search {
  position: relative;
  margin-left: 13px;
  width: 240px;
  height: 34px;
  background: #24282c;
  display: flex;
  align-items: center;
  gap: 9px;
  padding-left: 10px;
  font-size: 12.7px;
  color: #c6c8ca;
}

.tb-hoop {
  position: absolute;
  left: 183px;
  top: 1px;
}

.tb-view {
  margin-left: 12px;
}

.tb-apps {
  position: absolute;
  left: 323px;
  top: 0;
  height: 34px;
  display: flex;
}

.app {
  width: 41.2px;
  height: 34px;
  display: flex;
  align-items: center;
  justify-content: center;
  position: relative;
}

.app-on {
  background: #444;
  border-bottom: 2px solid #eda0a8;
}

.app-mark {
  border-bottom: 2px solid #eda0a8;
}

.wa-badge {
  position: absolute;
  left: 21px;
  top: 16px;
  width: 15px;
  height: 15px;
  border-radius: 50%;
  background: #222;
  border: 1px solid #777;
  font-size: 9px;
  font-weight: 500;
  line-height: 13px;
  text-align: center;
}

.prime {
  width: 20px;
  height: 20px;
  background: #1a86d8;
  color: #0d2a44;
  font-size: 6px;
  line-height: 6.5px;
  font-weight: 700;
  text-align: center;
  padding-top: 2px;
}

.tb-tile {
  width: 19px;
  height: 19px;
  background: #f4f6f8;
  display: flex;
  align-items: center;
  justify-content: center;
}

.tb-tray {
  position: absolute;
  left: 935px;
  top: 0;
  height: 34px;
  width: 345px;
  display: flex;
  align-items: center;
  font-size: 11.8px;
}

.nifty {
  margin-left: 6px;
  color: #e8e8e8;
}

.nifty-up {
  margin-left: 8px;
  color: #2aa52a;
}

.tray-up {
  margin-left: 23px;
}

.tray-icons {
  margin-left: 9px;
  width: 72px;
  display: flex;
  align-items: center;
  justify-content: space-between;
}

.clock {
  margin-left: 6px;
  width: 50px;
  display: flex;
  flex-direction: column;
  align-items: center;
  font-size: 10.4px;
  line-height: 15px;
  color: #ddd;
}

.notif {
  position: relative;
  margin-left: 15px;
  display: flex;
}

.notif-badge {
  position: absolute;
  left: 6px;
  top: 5px;
  width: 13px;
  height: 13px;
  border-radius: 50%;
  background: #222;
  border: 1px solid #777;
  font-size: 8px;
  line-height: 11px;
  text-align: center;
}
```
